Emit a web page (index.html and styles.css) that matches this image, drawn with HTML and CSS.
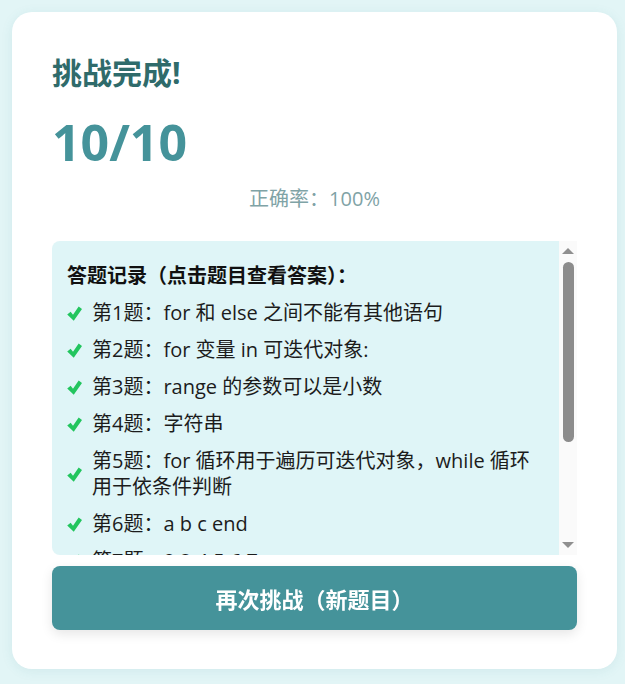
FILE: index.html
```html
<!DOCTYPE html>
<html lang="zh-CN">
<head>
<meta charset="utf-8">
<title>挑战完成</title>
<link rel="stylesheet" href="styles.css">
</head>
<body>
<main class="card">
  <h1 class="title">挑战完成!</h1>
  <div class="score">10/10</div>
  <p class="rate">正确率：100%</p>
  <section class="history">
    <div class="history-scroll">
      <h2 class="history-title">答题记录（点击题目查看答案）：</h2>
      <ul class="items">
        <li class="item"><svg class="check" viewBox="0 0 14 14"><path d="M0.2 7.9 L3.4 5.3 L5.6 8.2 L10.9 0.4 L14 2.7 L6.3 13.7 Z"/></svg><span class="text">第1题：for 和 else 之间不能有其他语句</span></li>
        <li class="item"><svg class="check" viewBox="0 0 14 14"><path d="M0.2 7.9 L3.4 5.3 L5.6 8.2 L10.9 0.4 L14 2.7 L6.3 13.7 Z"/></svg><span class="text">第2题：for 变量 in 可迭代对象:</span></li>
        <li class="item"><svg class="check" viewBox="0 0 14 14"><path d="M0.2 7.9 L3.4 5.3 L5.6 8.2 L10.9 0.4 L14 2.7 L6.3 13.7 Z"/></svg><span class="text">第3题：range 的参数可以是小数</span></li>
        <li class="item"><svg class="check" viewBox="0 0 14 14"><path d="M0.2 7.9 L3.4 5.3 L5.6 8.2 L10.9 0.4 L14 2.7 L6.3 13.7 Z"/></svg><span class="text">第4题：字符串</span></li>
        <li class="item"><svg class="check" viewBox="0 0 14 14"><path d="M0.2 7.9 L3.4 5.3 L5.6 8.2 L10.9 0.4 L14 2.7 L6.3 13.7 Z"/></svg><span class="text">第5题：for 循环用于遍历可迭代对象，while 循环用于依条件判断</span></li>
        <li class="item"><svg class="check" viewBox="0 0 14 14"><path d="M0.2 7.9 L3.4 5.3 L5.6 8.2 L10.9 0.4 L14 2.7 L6.3 13.7 Z"/></svg><span class="text">第6题：a b c end</span></li>
        <li class="item"><svg class="check" viewBox="0 0 14 14"><path d="M0.2 7.9 L3.4 5.3 L5.6 8.2 L10.9 0.4 L14 2.7 L6.3 13.7 Z"/></svg><span class="text">第7题：0 2 4 5 6 7</span></li>
        <li class="item"><svg class="check" viewBox="0 0 14 14"><path d="M0.2 7.9 L3.4 5.3 L5.6 8.2 L10.9 0.4 L14 2.7 L6.3 13.7 Z"/></svg><span class="text">第8题：break 会结束整个循环</span></li>
        <li class="item"><svg class="check" viewBox="0 0 14 14"><path d="M0.2 7.9 L3.4 5.3 L5.6 8.2 L10.9 0.4 L14 2.7 L6.3 13.7 Z"/></svg><span class="text">第9题：continue 跳过本次循环</span></li>
        <li class="item"><svg class="check" viewBox="0 0 14 14"><path d="M0.2 7.9 L3.4 5.3 L5.6 8.2 L10.9 0.4 L14 2.7 L6.3 13.7 Z"/></svg><span class="text">第10题：15</span></li>
      </ul>
    </div>
    <div class="scrollbar" aria-hidden="true">
      <svg class="arrow" viewBox="0 0 12 6"><path d="M0 6 L6 0 L12 6 Z"/></svg>
      <div class="thumb"></div>
      <div class="spacer"></div>
      <svg class="arrow" viewBox="0 0 12 6"><path d="M0 0 L12 0 L6 6 Z"/></svg>
    </div>
  </section>
  <button class="retry" type="button">再次挑战（新题目）</button>
</main>
</body>
</html>
```

FILE: styles.css
```css
html, body {
  margin: 0;
  padding: 0;
}
body {
  background: #e2f5f6;
  font-family: "Open Sans", "Noto Sans CJK SC", sans-serif;
  padding: 12px;
}
.card {
  width: 605px;
  box-sizing: border-box;
  background: #ffffff;
  border-radius: 20px;
  padding: 40px 40px 39px;
  box-shadow: 0 2px 12px rgba(60, 140, 145, 0.10);
  display: flex;
  flex-direction: column;
}
.title {
  margin: 0;
  font-size: 30px;
  line-height: 42px;
  font-weight: 700;
  color: #2f6b6b;
}
.score {
  margin-top: 18px;
  font-size: 50px;
  line-height: 60px;
  font-weight: 700;
  color: #45939a;
}
.rate {
  margin: 13px 0 0;
  text-align: center;
  font-size: 20px;
  line-height: 28px;
  color: #7fa3a6;
}
.history {
  margin-top: 28px;
  height: 314px;
  display: flex;
}
.history-scroll {
  flex: 1;
  min-width: 0;
  overflow-y: auto;
  scrollbar-width: none;
  background: #dff5f7;
  border-radius: 8px 0 0 8px;
  padding: 20px 15px;
  box-sizing: border-box;
}
.history-scroll::-webkit-scrollbar {
  display: none;
}
.scrollbar {
  flex: none;
  width: 18px;
  background: #fafafa;
  display: flex;
  flex-direction: column;
  align-items: center;
  padding: 7px 0 7px;
  box-sizing: border-box;
}
.arrow {
  width: 12px;
  height: 6px;
  fill: #8f8f8f;
  flex: none;
}
.thumb {
  margin-top: 8px;
  width: 11px;
  height: 180px;
  border-radius: 6px;
  background: #8c8c8c;
  flex: none;
}
.spacer {
  flex: 1;
}
.history-title {
  margin: 0 0 4px;
  font-size: 20px;
  line-height: 30px;
  font-weight: 700;
  color: #111;
}
.items {
  list-style: none;
  margin: 0;
  padding: 0;
}
.item {
  display: flex;
  align-items: center;
  gap: 10px;
  padding: 5px 0 6px;
  font-size: 20px;
  line-height: 26px;
  color: #1c1c1c;
}
.check {
  flex: none;
  width: 15px;
  height: 15px;
  fill: #22c55e;
}
.retry {
  margin-top: 11px;
  height: 64px;
  border: none;
  border-radius: 8px;
  background: #45939a;
  color: #ffffff;
  font-family: inherit;
  font-size: 22px;
  font-weight: 700;
  box-shadow: 0 4px 12px rgba(0, 0, 0, 0.10);
  cursor: pointer;
}
```
